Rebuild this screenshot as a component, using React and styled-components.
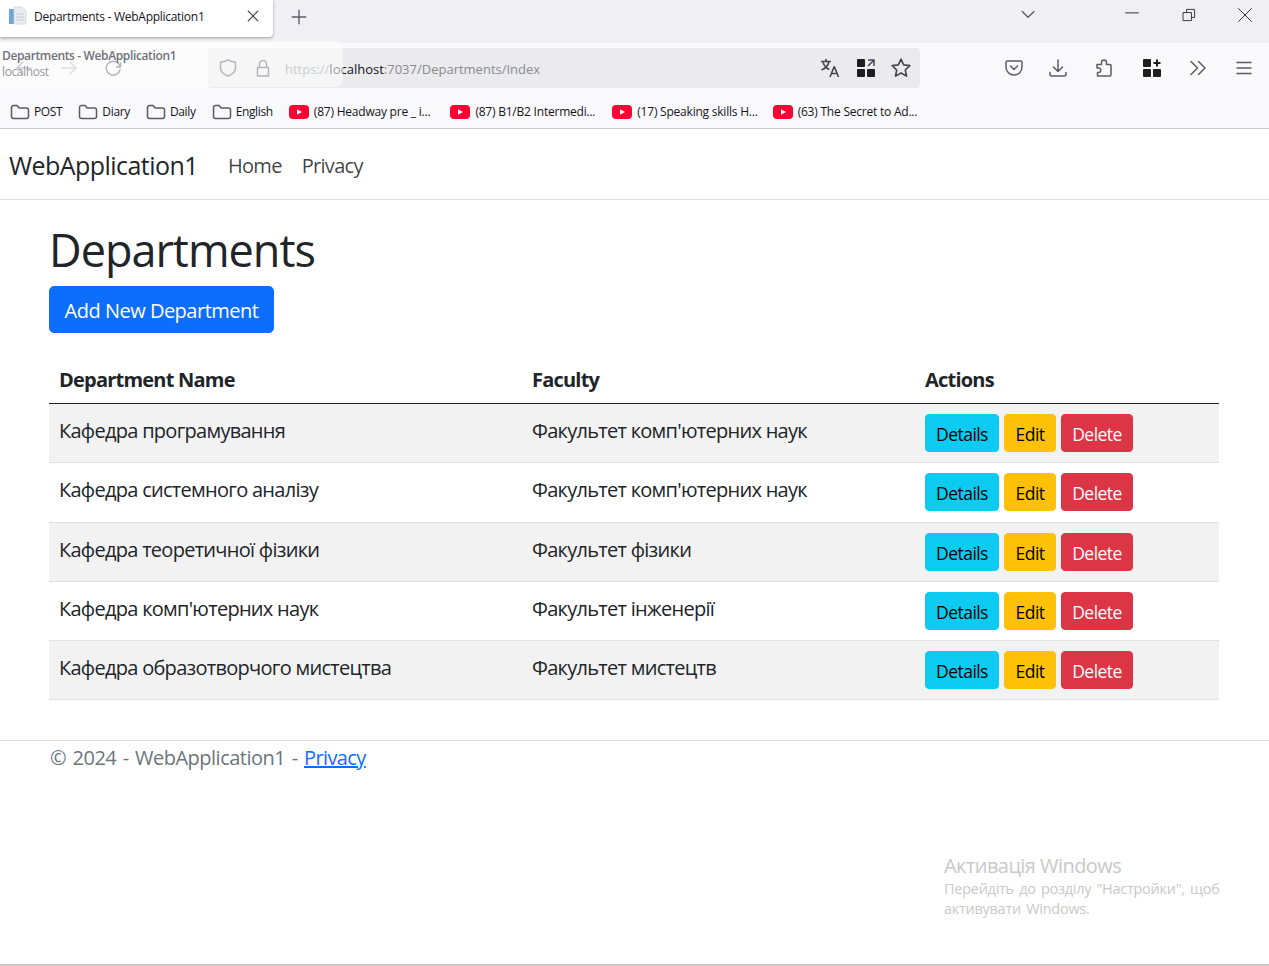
import React from 'react';
import styled, { createGlobalStyle } from 'styled-components';

const GlobalStyle = createGlobalStyle`
	html, body {
		margin: 0;
		padding: 0;
		background: #fff;
	}
	body {
		font-family: 'Open Sans', 'Liberation Sans', sans-serif;
		color: #212529;
	}
	* {
		box-sizing: border-box;
	}
`;

const departments = [
	{ name: 'Кафедра програмування', faculty: "Факультет комп'ютерних наук" },
	{ name: 'Кафедра системного аналізу', faculty: "Факультет комп'ютерних наук" },
	{ name: 'Кафедра теоретичної фізики', faculty: 'Факультет фізики' },
	{ name: "Кафедра комп'ютерних наук", faculty: 'Факультет інженерії' },
	{ name: 'Кафедра образотворчого мистецтва', faculty: 'Факультет мистецтв' },
];

const bookmarkFolders = ['POST', 'Diary', 'Daily', 'English'];
const bookmarkVideos = [
	{ label: '(87) Headway pre _ i...', gap: 20 },
	{ label: '(87) B1/B2 Intermedi...', gap: 17 },
	{ label: '(17) Speaking skills H...', gap: 15 },
	{ label: '(63) The Secret to Ad...', gap: 0 },
];

function Line({ size = 20, children, color = '#5b5b66', width = 1.5 }) {
	return (
		<svg width={size} height={size} viewBox="0 0 20 20" fill="none" stroke={color} strokeWidth={width} strokeLinecap="round" strokeLinejoin="round">
			{children}
		</svg>
	);
}

function FolderIcon() {
	return (
		<Line size={20}>
			<path d="M1.5 5.5a2 2 0 0 1 2-2h3.6l2 2.4h7.4a2 2 0 0 1 2 2v6.6a2 2 0 0 1-2 2h-13a2 2 0 0 1-2-2z" />
		</Line>
	);
}

function YoutubeIcon() {
	return (
		<svg width="20" height="14" viewBox="0 0 20 14">
			<rect width="20" height="14" rx="4" fill="#ff0033" />
			<path d="M8 4.2 13 7 8 9.8z" fill="#fff" />
		</svg>
	);
}

function TabFavicon() {
	return (
		<svg width="20" height="20" viewBox="0 0 20 20">
			<rect x="1" y="3" width="5" height="15" fill="#6ea6d6" />
			<path d="M6 1h8l4 4v13H6z" fill="#e8ecf1" stroke="#ccd3db" strokeWidth="0.7" />
			<path d="M8 8h8M8 11h8M8 14h8" stroke="#c3cad3" strokeWidth="1" />
		</svg>
	);
}

function App() {
	return (
		<>
			<GlobalStyle />
			<StyledPage>
				<StyledTabStrip>
					<StyledTab>
						<TabFavicon />
						<StyledTabTitle>Departments - WebApplication1</StyledTabTitle>
						<Line size={16} color="#3a3a42">
							<path d="M4 4l12 12M16 4 4 16" />
						</Line>
					</StyledTab>
					<StyledNewTab>
						<Line size={18}>
							<path d="M10 2.5v15M2.5 10h15" />
						</Line>
					</StyledNewTab>
					<StyledStripSpacer />
					<StyledListTabs>
						<Line size={18}>
							<path d="M2.5 6 9 12.5 15.5 6" />
						</Line>
					</StyledListTabs>
					<StyledWindowButton>
						<Line size={14} color="#2b2b2b" width={1.4}>
							<path d="M1 7h18" />
						</Line>
					</StyledWindowButton>
					<StyledWindowButton>
						<Line size={14} color="#2b2b2b" width={1.3}>
							<path d="M2 6.5h11.5V18H2zM6.5 6.5V2H18v11.5h-4.5" />
						</Line>
					</StyledWindowButton>
					<StyledWindowButton>
						<Line size={16} color="#2b2b2b" width={1.2}>
							<path d="M2 2l16 16M18 2 2 18" />
						</Line>
					</StyledWindowButton>
				</StyledTabStrip>

				<StyledToolbar>
					<StyledNavIcons>
						<Line size={20} color="#8f8f96">
							<path d="M17 10H3M9 4l-6 6 6 6" />
						</Line>
						<Line size={20} color="#b4b4ba">
							<path d="M3 10h14M11 4l6 6-6 6" />
						</Line>
						<Line size={20} color="#5b5b66">
							<path d="M16.5 5v4h-4M16 12a7 7 0 1 1-1.5-6.5L16.5 9" />
						</Line>
					</StyledNavIcons>
					<StyledUrlBar>
						<Line size={20}>
							<path d="M10 2c2.5 1.4 5 2 7.5 2v6c0 4-3.2 6.5-7.5 8-4.3-1.5-7.5-4-7.5-8V4C5 4 7.5 3.4 10 2z" />
						</Line>
						<Line size={20}>
							<path d="M4.5 9.5h11V18h-11zM6.5 9.5V6a3.5 3.5 0 0 1 7 0v3.5" />
						</Line>
						<StyledUrl>
							<StyledUrlMuted>https://</StyledUrlMuted>localhost<StyledUrlMuted>:7037/Departments/Index</StyledUrlMuted>
						</StyledUrl>
						<StyledUrlActions>
							<StyledTranslate>
								<svg width="20" height="20" viewBox="0 0 20 20" fill="none" stroke="#45454d" strokeWidth="1.6">
									<path d="M1 3.5h10M6 1v2.5M9 3.5c-.8 3.8-3.5 7-7.5 8.5M3 4.5c1.3 3.5 3.5 6 6.5 7M10 19l4-10h.5l4 10M11.5 15.5h5.5" />
								</svg>
							</StyledTranslate>
							<svg width="18" height="18" viewBox="0 0 18 18" fill="#1e1e22">
								<rect width="8" height="8" rx="1" />
								<rect y="10" width="8" height="8" rx="1" />
								<rect x="10" y="10" width="8" height="8" rx="1" />
								<path d="M11 1h6v6M16.5 1.5 11 7" stroke="#45454d" strokeWidth="1.5" fill="none" />
							</svg>
							<Line size={22} color="#45454d">
								<path d="M10 2l2.4 5.2 5.6.7-4.1 3.9 1.1 5.6L10 14.6 5 17.4l1.1-5.6L2 7.900l5.600-.7z" />
							</Line>
						</StyledUrlActions>
					</StyledUrlBar>
					<StyledToolbarIcons>
						<StyledToolIcon $after={24}>
							<Line size={20}>
								<path d="M3.5 3h13A1.5 1.5 0 0 1 18 4.5V9a8 8 0 0 1-16 0V4.5A1.5 1.5 0 0 1 3.5 3zM6.5 8l3.5 3.5L13.5 8" />
							</Line>
						</StyledToolIcon>
						<StyledToolIcon $after={26}>
							<Line size={20}>
								<path d="M10 2v11M5.5 9 10 13.5 14.5 9M2 14.5V16a2 2 0 0 0 2 2h12a2 2 0 0 0 2-2v-1.5" />
							</Line>
						</StyledToolIcon>
						<StyledToolIcon $after={29}>
							<Line size={20}>
								<path d="M3 6.5h4.5V4.5a2.5 2.5 0 0 1 5 0v2h3.500a1 1 0 0 1 1 1V17a1 1 0 0 1-1 1H3.500v-3.500h1a2.300 2.300 0 0 0 0-4.600H3z" />
							</Line>
						</StyledToolIcon>
						<StyledToolIcon $after={27}>
							<svg width="18" height="18" viewBox="0 0 18 18" fill="#1e1e22">
								<rect width="8" height="8" rx="1" />
								<rect y="10" width="8" height="8" rx="1" />
								<rect x="10" y="10" width="8" height="8" rx="1" />
								<path d="M14 .5v7M10.5 4h7" stroke="#1e1e22" strokeWidth="2" fill="none" />
							</svg>
						</StyledToolIcon>
						<StyledToolIcon $after={26}>
							<Line size={20}>
								<path d="M3 3.5 9.5 10 3 16.5M10.5 3.5 17 10l-6.5 6.5" />
							</Line>
						</StyledToolIcon>
						<StyledToolIcon>
							<Line size={20}>
								<path d="M3 4.5h14M3 10h14M3 15.5h14" />
							</Line>
						</StyledToolIcon>
					</StyledToolbarIcons>
					<StyledTabPreview>
						<StyledPreviewTitle>Departments - WebApplication1</StyledPreviewTitle>
						<StyledPreviewHost>localhost</StyledPreviewHost>
					</StyledTabPreview>
				</StyledToolbar>

				<StyledBookmarks>
					{bookmarkFolders.map((label) => (
						<StyledBookmark key={label}>
							<FolderIcon />
							{label}
						</StyledBookmark>
					))}
					{bookmarkVideos.map((video) => (
						<StyledVideoBookmark key={video.label} $after={video.gap}>
							<YoutubeIcon />
							{video.label}
						</StyledVideoBookmark>
					))}
				</StyledBookmarks>

				<StyledNavbar>
					<StyledBrand>WebApplication1</StyledBrand>
					<StyledNavLink>Home</StyledNavLink>
					<StyledNavLink>Privacy</StyledNavLink>
				</StyledNavbar>

				<StyledMain>
					<StyledHeading>Departments</StyledHeading>
					<StyledPrimaryButton>Add New Department</StyledPrimaryButton>
					<StyledTable>
						<thead>
							<tr>
								<StyledTh $width="473px">Department Name</StyledTh>
								<StyledTh $width="393px">Faculty</StyledTh>
								<StyledTh>Actions</StyledTh>
							</tr>
						</thead>
						<tbody>
							{departments.map((dept, index) => (
								<StyledRow key={dept.name} $striped={index % 2 === 0}>
									<StyledTd>
										<StyledCellText>{dept.name}</StyledCellText>
									</StyledTd>
									<StyledTd>
										<StyledCellText>{dept.faculty}</StyledCellText>
									</StyledTd>
									<StyledTd>
										<StyledActions>
											<StyledSmallButton $bg="#0dcaf0" $width={74}>Details</StyledSmallButton>
											<StyledSmallButton $bg="#ffc107" $width={52}>Edit</StyledSmallButton>
											<StyledSmallButton $bg="#dc3545" $color="#fff" $width={72}>Delete</StyledSmallButton>
										</StyledActions>
									</StyledTd>
								</StyledRow>
							))}
						</tbody>
					</StyledTable>
				</StyledMain>

				<StyledFooter>
					© 2024 - WebApplication1 - <StyledFooterLink href="#">Privacy</StyledFooterLink>
				</StyledFooter>

				<StyledWatermark>
					<StyledWatermarkTitle>Активація Windows</StyledWatermarkTitle>
					<StyledWatermarkText>Перейдіть до розділу "Настройки", щоб</StyledWatermarkText>
					<StyledWatermarkText>активувати Windows.</StyledWatermarkText>
				</StyledWatermark>
			</StyledPage>
		</>
	);
}

const StyledPage = styled.div`
	position: relative;
	width: 100%;
	height: 966px;
	overflow: hidden;
	display: flex;
	flex-direction: column;
	border-bottom: 2px solid #cfc6c1;
`;

const StyledTabStrip = styled.div`
	height: 43px;
	flex-shrink: 0;
	background-color: #f0f0f4;
	display: flex;
	align-items: flex-start;
`;

const StyledTab = styled.div`
	width: 273px;
	height: 37px;
	padding: 0 12px 5px 8px;
	background-color: #fff;
	border-bottom-right-radius: 4px;
	box-shadow: 0 1px 3px rgba(0, 0, 0, 0.35);
	display: flex;
	align-items: center;
	gap: 6px;
`;

const StyledTabTitle = styled.span`
	flex: 1;
	font-size: 12px;
	letter-spacing: -0.28px;
	color: #15141a;
	white-space: nowrap;
`;

const StyledNewTab = styled.div`
	margin-left: 17px;
	height: 34px;
	display: flex;
	align-items: center;
`;

const StyledStripSpacer = styled.div`
	flex: 1;
`;

const StyledListTabs = styled.div`
	margin-right: 70px;
	height: 30px;
	display: flex;
	align-items: center;
`;

const StyledWindowButton = styled.div`
	width: 48px;
	height: 30px;
	margin-right: 8.5px;
	display: flex;
	align-items: center;
	justify-content: center;

	&:last-child {
		margin-right: 0;
	}
`;

const StyledToolbar = styled.div`
	position: relative;
	height: 49px;
	flex-shrink: 0;
	background-color: #f9f9fb;
	display: flex;
	align-items: center;
	padding: 1px 15px 0 14px;
`;

const StyledNavIcons = styled.div`
	width: 194px;
	display: flex;
	gap: 25px;
`;

const StyledUrlBar = styled.div`
	width: 712px;
	height: 40px;
	background-color: #ebebed;
	border-radius: 4px;
	display: flex;
	align-items: center;
	gap: 15px;
	padding: 0 8px 0 10px;
`;

const StyledUrl = styled.div`
	flex: 1;
	margin: 2px 0 0 -3px;
	font-size: 13px;
	color: #15141a;
	white-space: nowrap;
`;

const StyledUrlMuted = styled.span`
	color: #8a8a90;
`;

const StyledUrlActions = styled.div`
	display: flex;
	align-items: center;
	gap: 15px;
`;

const StyledTranslate = styled.div`
	display: flex;
	margin-right: 2px;
`;

const StyledToolbarIcons = styled.div`
	flex: 1;
	display: flex;
	align-items: center;
	justify-content: flex-end;
`;

const StyledToolIcon = styled.div`
	display: flex;
	margin-right: ${(props) => props.$after || 0}px;
`;

const StyledTabPreview = styled.div`
	position: absolute;
	left: -4px;
	top: -2px;
	width: 347px;
	height: 46px;
	padding: 6px 0 0 6px;
	background-color: rgba(255, 255, 255, 0.55);
	border-radius: 8px;
`;

const StyledPreviewTitle = styled.div`
	font-size: 12px;
	line-height: 17px;
	font-weight: 600;
	letter-spacing: -0.37px;
	color: #71717a;
	white-space: nowrap;
`;

const StyledPreviewHost = styled.div`
	font-size: 12px;
	line-height: 16px;
	letter-spacing: -0.4px;
	color: #98989e;
`;

const StyledBookmarks = styled.div`
	height: 37px;
	flex-shrink: 0;
	background-color: #f9f9fb;
	border-bottom: 1px solid #c8c8cc;
	display: flex;
	align-items: center;
	padding: 3px 0 0 10px;
`;

const StyledBookmark = styled.div`
	display: flex;
	align-items: center;
	gap: 4px;
	margin-right: 16px;
	font-size: 12px;
	letter-spacing: -0.35px;
	color: #15141a;
	white-space: nowrap;
`;

const StyledVideoBookmark = styled(StyledBookmark)`
	gap: 5px;
	letter-spacing: -0.22px;
	margin-right: ${(props) => props.$after}px;
`;

const StyledNavbar = styled.nav`
	height: 71px;
	flex-shrink: 0;
	border-bottom: 1px solid #dee2e6;
	display: flex;
	align-items: center;
	padding: 2px 0 0 9px;
`;

const StyledBrand = styled.div`
	font-size: 25px;
	letter-spacing: -0.55px;
	color: #212529;
	margin-right: 30px;
`;

const StyledNavLink = styled.div`
	font-size: 20px;
	letter-spacing: -0.7px;
	color: rgba(0, 0, 0, 0.75);
	margin-right: 20px;
	margin-top: 1px;
`;

const StyledMain = styled.main`
	padding: 20px 50px 0 49px;
	height: 541px;
	flex-shrink: 0;
	border-bottom: 1px solid #dee2e6;
`;

const StyledHeading = styled.h1`
	margin: 0 0 6px 0;
	font-size: 45px;
	font-weight: 400;
	line-height: 60px;
	letter-spacing: -1px;
	color: #212529;
`;

const StyledPrimaryButton = styled.button`
	display: block;
	height: 47px;
	width: 225px;
	padding: 2px 0 0;
	border: 1px solid #0d6efd;
	border-radius: 5px;
	background-color: #0d6efd;
	color: #fff;
	font-family: inherit;
	font-size: 20px;
	letter-spacing: -0.5px;
`;

const StyledTable = styled.table`
	width: 1170px;
	margin-top: 25px;
	border-collapse: collapse;
	table-layout: fixed;
`;

const StyledTh = styled.th`
	width: ${(props) => props.$width || 'auto'};
	height: 45.6px;
	padding: 0 10px 3px;
	text-align: left;
	font-size: 20px;
	font-weight: 700;
	letter-spacing: -0.78px;
	color: #212529;
	border-bottom: 1px solid #212529;
`;

const StyledRow = styled.tr`
	background-color: ${(props) => (props.$striped ? '#f2f2f2' : '#fff')};
`;

const StyledTd = styled.td`
	height: 59.25px;
	padding: 10px;
	vertical-align: top;
	border-bottom: 1px solid #dee2e6;
`;

const StyledCellText = styled.div`
	margin-top: 2px;
	font-size: 20px;
	line-height: 30px;
	letter-spacing: -0.72px;
	color: #212529;
`;

const StyledActions = styled.div`
	display: flex;
	gap: 5px;
`;

const StyledSmallButton = styled.button`
	width: ${(props) => props.$width}px;
	height: 38px;
	padding: 2px 0 0;
	border: 1px solid ${(props) => props.$bg};
	border-radius: 4px;
	background-color: ${(props) => props.$bg};
	color: ${(props) => props.$color || '#000'};
	font-family: inherit;
	font-size: 17.5px;
	letter-spacing: -0.55px;
`;

const StyledFooter = styled.footer`
	padding: 2px 0 0 50px;
	font-size: 20px;
	line-height: 30px;
	letter-spacing: -0.5px;
	word-spacing: 1.7px;
	color: #6c757d;
`;

const StyledFooterLink = styled.a`
	color: #0d6efd;
	letter-spacing: -0.6px;
	text-decoration: underline;
`;

const StyledWatermark = styled.div`
	position: absolute;
	left: 944px;
	top: 853px;
	color: #c9c9c9;
	white-space: nowrap;
`;

const StyledWatermarkTitle = styled.div`
	font-size: 20px;
	line-height: 26px;
	letter-spacing: -0.55px;
`;

const StyledWatermarkText = styled.div`
	font-size: 14.5px;
	line-height: 20px;
	letter-spacing: -0.27px;
	word-spacing: 1.8px;
`;

export default App;
